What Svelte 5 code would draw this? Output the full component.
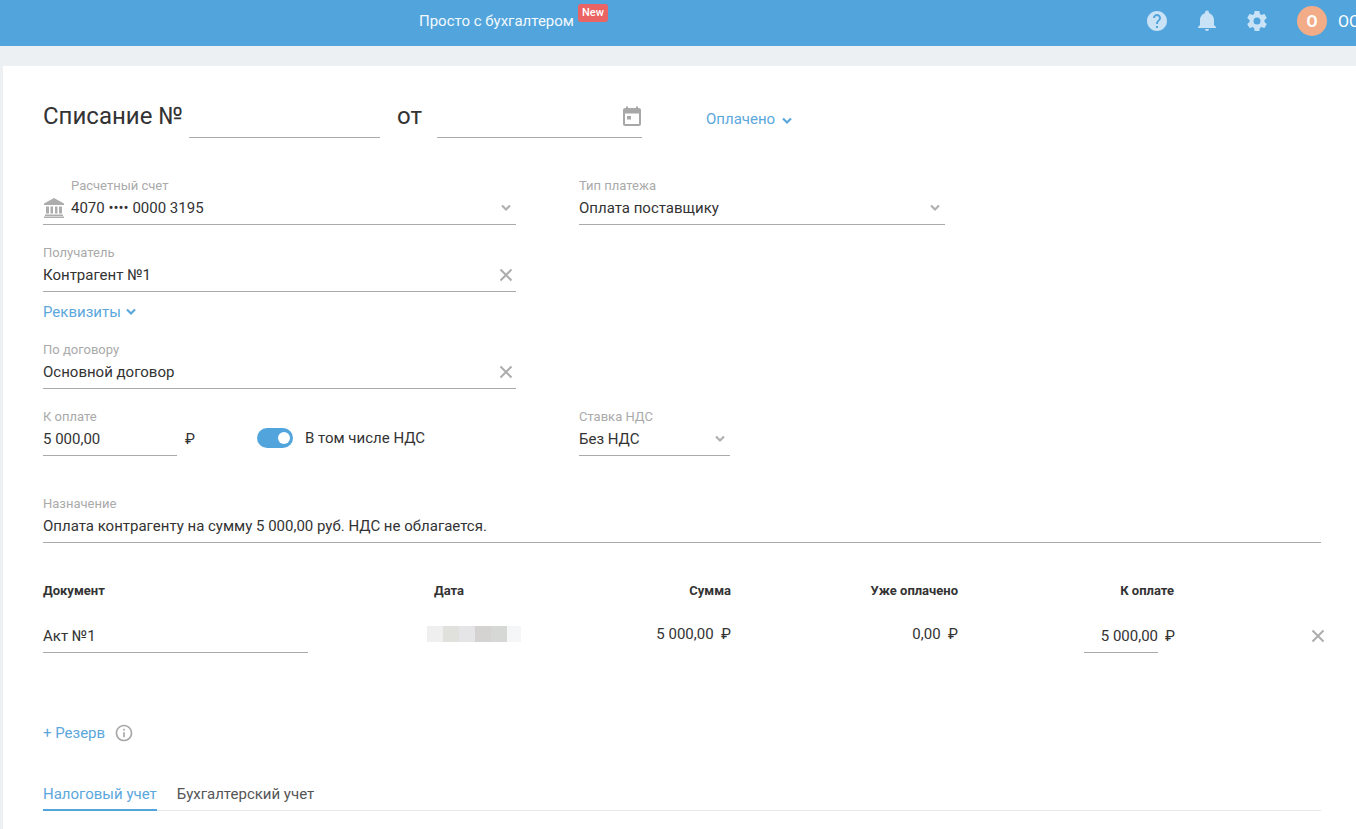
<script>
  const blur = [
    ['#efefef', 16], ['#e0e1dc', 16], ['#e5e5e7', 16], ['#d5d3d1', 16], ['#d6d8d6', 16], ['#f5f6f8', 14]
  ];
</script>

{#snippet chevron()}
  <svg class="chev" width="12" height="8" viewBox="0 0 12 8"><path d="M2 1.500l4 4 4-4" fill="none" stroke="currentColor" stroke-width="2.200"/></svg>
{/snippet}
{#snippet cross()}
  <svg class="cross" width="14" height="14" viewBox="0 0 14 14"><path d="M1.500 1.500l11 11m0-11l-11 11" fill="none" stroke="currentColor" stroke-width="2"/></svg>
{/snippet}

<header class="topbar">
  <a class="promo">Просто с бухгалтером</a>
  <span class="badge">New</span>
  <div class="actions">
    <svg class="hi" width="24" height="24" viewBox="0 0 24 24"><path d="M12 2C6.480 2 2 6.480 2 12s4.480 10 10 10 10-4.480 10-10S17.520 2 12 2zm1 17h-2v-2h2v2zm2.070-7.750l-.9.920C13.450 12.900 13 13.500 13 15h-2v-.5c0-1.100.450-2.100 1.170-2.830l1.240-1.260c.37-.36.590-.86.590-1.410 0-1.100-.9-2-2-2s-2 .9-2 2H8c0-2.210 1.790-4 4-4s4 1.790 4 4c0 .88-.360 1.680-.930 2.250z"/></svg>
    <svg class="hi" width="24" height="24" viewBox="0 0 24 24"><path d="M12 22c1.100 0 2-.9 2-2h-4c0 1.100.9 2 2 2zm7-6v-5c0-3.350-2.100-6.150-5-6.850V3.500a2 2 0 0 0-4 0v.65C7.100 4.850 5 7.650 5 11v5l-2 2v1h18v-1l-2-2z"/></svg>
    <svg class="hi" width="24" height="24" viewBox="0 0 24 24"><path d="M19.430 12.980c.04-.32.070-.64.070-.98s-.03-.66-.07-.98l2.110-1.650c.19-.15.240-.42.120-.64l-2-3.460c-.12-.22-.39-.3-.61-.22l-2.490 1c-.52-.4-1.080-.73-1.690-.98l-.38-2.650A.49.490 0 0 0 14 2h-4c-.25 0-.46.180-.49.420l-.38 2.650c-.61.250-1.170.59-1.690.98l-2.490-1c-.23-.09-.49 0-.61.220l-2 3.460c-.13.220-.07.490.12.640l2.110 1.650c-.04.320-.07.650-.07.980s.03.660.07.980l-2.110 1.650c-.19.150-.24.420-.12.640l2 3.460c.12.220.39.300.61.220l2.490-1c.52.400 1.080.730 1.690.980l.38 2.650c.03.240.24.420.49.420h4c.25 0 .46-.18.490-.42l.38-2.650c.61-.25 1.170-.59 1.690-.98l2.490 1c.23.090.49 0 .61-.22l2-3.460c.12-.22.070-.49-.12-.64l-2.110-1.650zM12 15.500a3.500 3.500 0 1 1 0-7 3.500 3.500 0 0 1 0 7z"/></svg>
    <span class="avatar">О</span>
    <span class="org">ООО</span>
  </div>
</header>

<main class="card">
  <div class="title-row">
    <h1>Списание №</h1>
    <div class="line number"></div>
    <span class="from">от</span>
    <div class="line date">
      <svg width="24" height="24" viewBox="0 0 24 24" fill="#a8a8a8"><path d="M19 3h-1V1.500h-2V3H8V1.500H6V3H5c-1.100 0-2 .9-2 2v14c0 1.100.9 2 2 2h14c1.100 0 2-.9 2-2V5c0-1.100-.9-2-2-2zm0 16H5V8.500h14V19z" fill-rule="evenodd"/><rect x="7" y="11" width="4" height="3.500"/></svg>
    </div>
    <a class="link status">Оплачено {@render chevron()}</a>
  </div>

  <div class="grid row-account">
    <div class="field with-icon">
      <label>Расчетный счет</label>
      <div class="value">
        <svg class="bank" width="22" height="22" viewBox="0 0 22 22" fill="#adadad"><path d="M11 1 1 6.500V8h20V6.500L11 1zM3 9.500h3v7H3zM7.500 9.500H10v7H7.500zM12 9.500h2.500v7H12zM16 9.500h3v7h-3zM2 17.500h18V19H2zM1 19.500h20V21H1z"/></svg>
        <span>4070 •••• 0000 3195</span>
        {@render chevron()}
      </div>
    </div>
    <div class="field">
      <label>Тип платежа</label>
      <div class="value"><span>Оплата поставщику</span>{@render chevron()}</div>
    </div>
  </div>

  <div class="grid row-recipient">
    <div class="field">
      <label>Получатель</label>
      <div class="value"><span>Контрагент №1</span>{@render cross()}</div>
    </div>
  </div>

  <a class="link details">Реквизиты {@render chevron()}</a>

  <div class="grid row-contract">
    <div class="field">
      <label>По договору</label>
      <div class="value"><span>Основной договор</span>{@render cross()}</div>
    </div>
  </div>

  <div class="grid row-pay">
    <div class="pay">
      <div class="field amount">
        <label>К оплате</label>
        <div class="value"><span>5 000,00</span></div>
      </div>
      <span class="rub">₽</span>
      <span class="toggle"><span class="knob"></span></span>
      <span class="toggle-label">В том числе НДС</span>
    </div>
    <div class="field vat">
      <label>Ставка НДС</label>
      <div class="value"><span>Без НДС</span>{@render chevron()}</div>
    </div>
  </div>

  <div class="field purpose">
    <label>Назначение</label>
    <div class="value"><span>Оплата контрагенту на сумму 5 000,00 руб. НДС не облагается.</span></div>
  </div>

  <div class="table">
    <div class="th">Документ</div>
    <div class="th">Дата</div>
    <div class="th r">Сумма</div>
    <div class="th r">Уже оплачено</div>
    <div class="th r">К оплате</div>
    <div></div>

    <div class="doc"><span>Акт №1</span></div>
    <div class="blur">
      {#each blur as [c, w]}<span style="background:{c};width:{w}px"></span>{/each}
    </div>
    <div class="r sum">5 000,00 &nbsp;₽</div>
    <div class="r sum">0,00 &nbsp;₽</div>
    <div class="r topay"><span class="inp">5 000,00</span><span class="cur">₽</span></div>
    <div class="rm">{@render cross()}</div>
  </div>

  <div class="reserve">
    <a class="link">+ Резерв</a>
    <svg width="20" height="20" viewBox="0 0 24 24" fill="#a8a8a8"><path d="M11 7h2v2h-2zm0 4h2v6h-2zm1-9C6.480 2 2 6.480 2 12s4.480 10 10 10 10-4.480 10-10S17.520 2 12 2zm0 18c-4.410 0-8-3.590-8-8s3.590-8 8-8 8 3.590 8 8-3.590 8-8 8z"/></svg>
  </div>

  <nav class="tabs">
    <a class="tab active">Налоговый учет</a>
    <a class="tab">Бухгалтерский учет</a>
  </nav>
</main>

<style>
  :global(body) {
    margin: 0;
    background: #edf0f3;
    font-family: Roboto, "Noto Sans", sans-serif;
    color: #333;
    overflow: hidden;
  }
  .topbar {
    height: 46px;
    background: #52a5dc;
    display: flex;
    align-items: center;
    padding-left: 419px;
    color: #fff;
    overflow: hidden;
  }
  .promo { font-size: 15px; color: #f2f9fe; margin-bottom: 4px; }
  .badge {
    background: #ea6464;
    color: #fff;
    font-size: 11px;
    font-weight: 500;
    height: 18px;
    line-height: 18px;
    width: 30px;
    text-align: center;
    border-radius: 3px;
    margin: -20px 0 0 4px;
  }
  .actions {
    margin: 0 0 4px auto;
    display: flex;
    align-items: center;
    width: 211px;
    flex: none;
  }
  .hi { fill: #c9e2f6; margin-right: 26px; flex: none; }
  .avatar {
    width: 30px;
    height: 30px;
    border-radius: 50%;
    background: #f3ac88;
    color: #fff;
    font-weight: 700;
    font-size: 16px;
    display: flex;
    align-items: center;
    justify-content: center;
    margin-left: 2px;
    flex: none;
  }
  .org { margin-left: 11px; font-size: 16px; white-space: nowrap; }

  .card {
    margin: 20px 0 0 3px;
    background: #fff;
    padding: 0 35px 40px 40px;
    height: 763px;
    box-sizing: border-box;
    overflow: hidden;
  }
  .title-row {
    display: flex;
    align-items: flex-start;
    padding-top: 34px;
    height: 72px;
    box-sizing: border-box;
  }
  h1 { margin: 0; font-size: 24px; font-weight: 400; line-height: 32px; width: 146px; flex: none; color: #333; }
  .line { border-bottom: 1px solid #aaa; height: 37px; flex: none; }
  .number { width: 191px; }
  .from { font-size: 24px; line-height: 32px; margin-left: 17px; width: 40px; flex: none; }
  .date { width: 205px; display: flex; justify-content: flex-end; align-items: flex-start; }
  .date svg { margin: 5px -2px 0 0; flex: none; }
  .link { color: #5ba7dc; font-size: 15px; }
  .status { margin: 10px 0 0 64px; display: flex; align-items: center; gap: 6px; }
  .status .chev { margin-top: 3px; }

  .grid { display: grid; grid-template-columns: 473px 366px; column-gap: 63px; }
  label { display: block; font-size: 13px; line-height: 15px; color: #aaa; }
  .value {
    display: flex;
    align-items: center;
    height: 32px;
    padding-bottom: 1px;
    border-bottom: 1px solid #aaa;
    font-size: 15px;
    box-sizing: border-box;
    color: #333;
  }
  .value span { flex: 1; white-space: nowrap; }
  .chev { color: #b0b0b0; flex: none; }
  .link .chev { color: #5ba7dc; }
  .value .chev { margin-right: 4px; }
  .cross { color: #adadad; flex: none; }
  .value .cross { margin-right: 3px; }

  .with-icon label { padding-left: 28px; }
  .bank { margin: 0 6px 0 0; flex: none; }
  .row-account { margin-top: 40px; }
  .row-recipient { margin-top: 20px; }
  .details { display: flex; align-items: center; gap: 4px; margin-top: 11px; line-height: 18px; }
  .row-contract { margin-top: 21px; }
  .row-pay { margin-top: 20px; }
  .pay { display: flex; align-items: flex-start; }
  .amount { width: 134px; flex: none; }
  .rub { font-size: 15px; margin: 21px 0 0 8px; width: 72px; flex: none; }
  .toggle {
    width: 36px; height: 20px; border-radius: 10px; background: #52a5dc;
    margin-top: 19px; position: relative; flex: none;
  }
  .knob { position: absolute; right: 3px; top: 4px; width: 12px; height: 12px; border-radius: 50%; background: #fff; }
  .toggle-label { font-size: 15px; margin: 20px 0 0 12px; white-space: nowrap; }
  .vat { width: 151px; }
  .purpose { margin-top: 40px; }

  .table {
    display: grid;
    grid-template-columns: 391px 100px 197px 227px 216px 147px;
    margin-top: 40px;
    font-size: 15px;
    align-items: start;
  }
  .th { font-size: 13px; font-weight: 700; line-height: 16px; color: #333; }
  .r { text-align: right; }
  .doc { margin-top: 25px; width: 265px; border-bottom: 1px solid #aaa; height: 28px; line-height: 24px; }
  .blur { display: flex; height: 16px; margin: 27px 0 0 -7px; }
  .sum { margin-top: 25px; line-height: 20px; }
  .topay { margin-top: 25px; display: flex; justify-content: flex-end; }
  .inp { width: 74px; height: 28px; line-height: 24px; border-bottom: 1px solid #aaa; text-align: right; }
  .cur { margin-left: 7px; width: 9px; line-height: 24px; }
  .rm { margin: 30px 0 0 137px; }
  .reserve { display: flex; align-items: center; gap: 9px; margin-top: 68px; height: 24px; }
  .tabs { display: flex; gap: 20px; margin-top: 39px; border-bottom: 1px solid #e6e8ea; }
  .tab { font-size: 15px; line-height: 20px; padding-bottom: 5px; color: #555; margin-bottom: -1px; }
  .tab.active { color: #5ba7dc; border-bottom: 2px solid #52a5dc; }
</style>
